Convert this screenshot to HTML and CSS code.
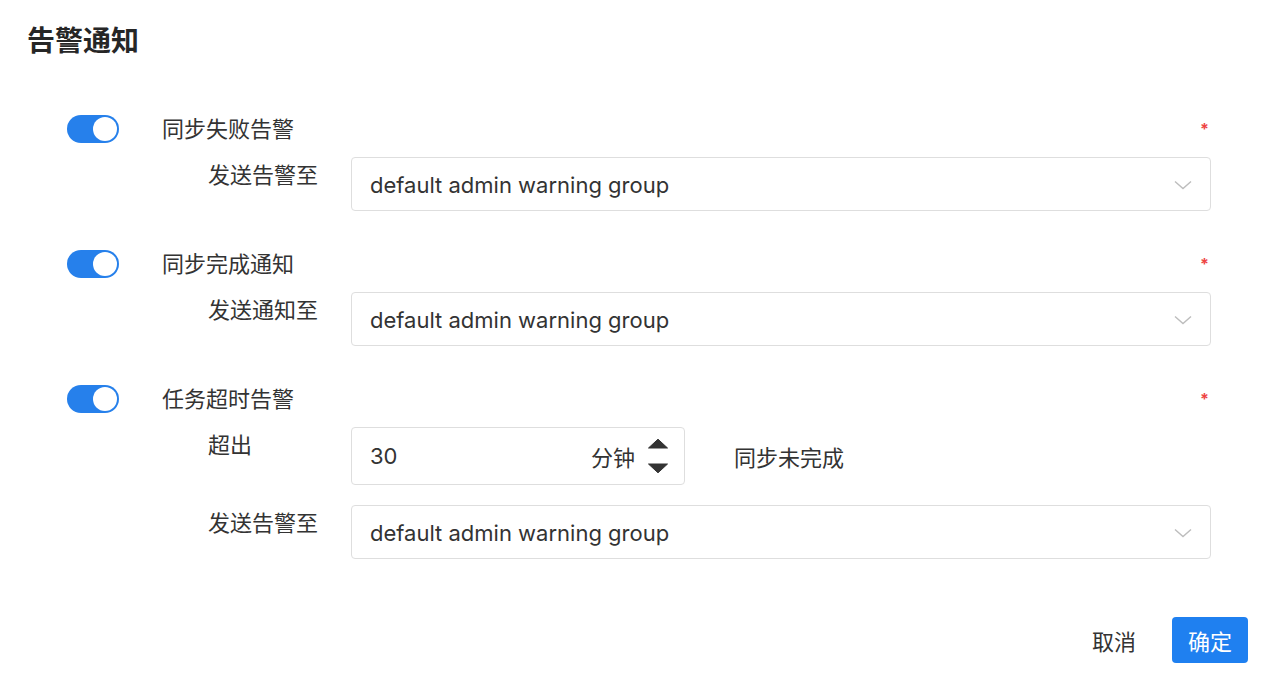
FILE: index.html
```html
<!DOCTYPE html>
<html lang="zh-CN">
<head>
<meta charset="utf-8">
<title>告警通知</title>
<link rel="stylesheet" href="styles.css">
</head>
<body>
<div class="dialog">
  <h1 class="title">告警通知</h1>
  <div class="form">
    <section class="group">
      <div class="group-head">
        <span class="toggle"><span class="knob"></span></span>
        <span class="head-label">同步失败告警</span>
        <span class="req">*</span>
      </div>
      <div class="field">
        <span class="field-label">发送告警至</span>
        <div class="select">
          <span class="select-value">default admin warning group</span>
          <svg class="chev" width="18" height="10" viewBox="0 0 18 10"><polyline points="1,1.5 9,8.5 17,1.5" fill="none" stroke="#bdbdbd" stroke-width="1.4"/></svg>
        </div>
      </div>
    </section>

    <section class="group">
      <div class="group-head">
        <span class="toggle"><span class="knob"></span></span>
        <span class="head-label">同步完成通知</span>
        <span class="req">*</span>
      </div>
      <div class="field">
        <span class="field-label">发送通知至</span>
        <div class="select">
          <span class="select-value">default admin warning group</span>
          <svg class="chev" width="18" height="10" viewBox="0 0 18 10"><polyline points="1,1.5 9,8.5 17,1.5" fill="none" stroke="#bdbdbd" stroke-width="1.4"/></svg>
        </div>
      </div>
    </section>

    <section class="group">
      <div class="group-head">
        <span class="toggle"><span class="knob"></span></span>
        <span class="head-label">任务超时告警</span>
        <span class="req">*</span>
      </div>
      <div class="field">
        <span class="field-label">超出</span>
        <div class="inline">
          <div class="number">
            <span class="num-value">30</span>
            <span class="unit">分钟</span>
            <span class="spin">
              <svg width="22" height="11" viewBox="0 0 22 11"><path d="M11 1.2 L20.5 10 H1.5 Z" fill="#333" stroke="#333" stroke-width="1" stroke-linejoin="round"/></svg>
              <svg width="22" height="11" viewBox="0 0 22 11"><path d="M1.5 1 H20.5 L11 9.8 Z" fill="#333" stroke="#333" stroke-width="1" stroke-linejoin="round"/></svg>
            </span>
          </div>
          <span class="after">同步未完成</span>
        </div>
      </div>
      <div class="field field-gap">
        <span class="field-label">发送告警至</span>
        <div class="select">
          <span class="select-value">default admin warning group</span>
          <svg class="chev" width="18" height="10" viewBox="0 0 18 10"><polyline points="1,1.5 9,8.5 17,1.5" fill="none" stroke="#bdbdbd" stroke-width="1.4"/></svg>
        </div>
      </div>
    </section>
  </div>
  <div class="footer">
    <button class="btn btn-cancel">取消</button>
    <button class="btn btn-primary">确定</button>
  </div>
</div>
</body>
</html>
```
FILE: styles.css
```css
html, body {
  margin: 0;
  padding: 0;
  background: #fff;
}
body {
  font-family: Inter, "Noto Sans CJK SC", sans-serif;
  color: #333;
  font-size: 22px;
}
.dialog {
  width: 1280px;
  height: 687px;
  box-sizing: border-box;
  padding-top: 21px;
  display: flex;
  flex-direction: column;
}
.title {
  margin: 0 0 0 27px;
  font-size: 28px;
  line-height: 40px;
  font-weight: 700;
  color: #262626;
}
.form {
  padding: 0 69px 0 67px;
  margin-top: 54px;
  display: flex;
  flex-direction: column;
  gap: 39px;
}
.group {
  display: flex;
  flex-direction: column;
}
.group-head {
  display: flex;
  align-items: center;
  height: 28px;
}
.toggle {
  width: 52px;
  height: 28px;
  border-radius: 14px;
  background: #2680eb;
  display: flex;
  align-items: center;
  justify-content: flex-end;
  padding: 0 2px;
  box-sizing: border-box;
}
.knob {
  width: 24px;
  height: 24px;
  border-radius: 50%;
  background: #fff;
}
.head-label {
  margin-left: 43px;
  flex: 1;
  line-height: 28px;
}
.req {
  color: #ee4444;
  font-size: 16px;
  line-height: 16px;
  margin-right: 2px;
  font-weight: 700;
}
.field {
  display: flex;
  align-items: flex-start;
  padding-left: 141px;
  margin-top: 14px;
}
.field-gap {
  margin-top: 20px;
}
.field-label {
  width: 143px;
  flex: none;
  padding-top: 7px;
  line-height: 22px;
}
.select {
  flex: 1;
  height: 54px;
  box-sizing: border-box;
  border: 1px solid #dedede;
  border-radius: 4px;
  display: flex;
  align-items: center;
  padding: 2px 18px 0 18px;
}
.select-value {
  flex: 1;
}
.chev {
  display: block;
}
.inline {
  display: flex;
  align-items: center;
}
.number {
  width: 334px;
  height: 58px;
  box-sizing: border-box;
  border: 1px solid #dedede;
  border-radius: 4px;
  display: flex;
  align-items: center;
  padding: 0 15px 0 18px;
}
.num-value {
  flex: 1;
}
.unit {
  margin-right: 12px;
}
.spin {
  display: flex;
  flex-direction: column;
  gap: 14px;
}
.spin svg {
  display: block;
}
.after {
  margin-left: 49px;
}
.footer {
  display: flex;
  justify-content: flex-end;
  align-items: center;
  gap: 20px;
  padding-right: 32px;
  margin-top: 58px;
}
.btn {
  font-family: inherit;
  font-size: 22px;
  height: 46px;
  padding: 0 16px;
  border: none;
  border-radius: 4px;
  background: transparent;
  color: #333;
}
.btn-primary {
  background: #1f80f0;
  color: #fff;
}
```
